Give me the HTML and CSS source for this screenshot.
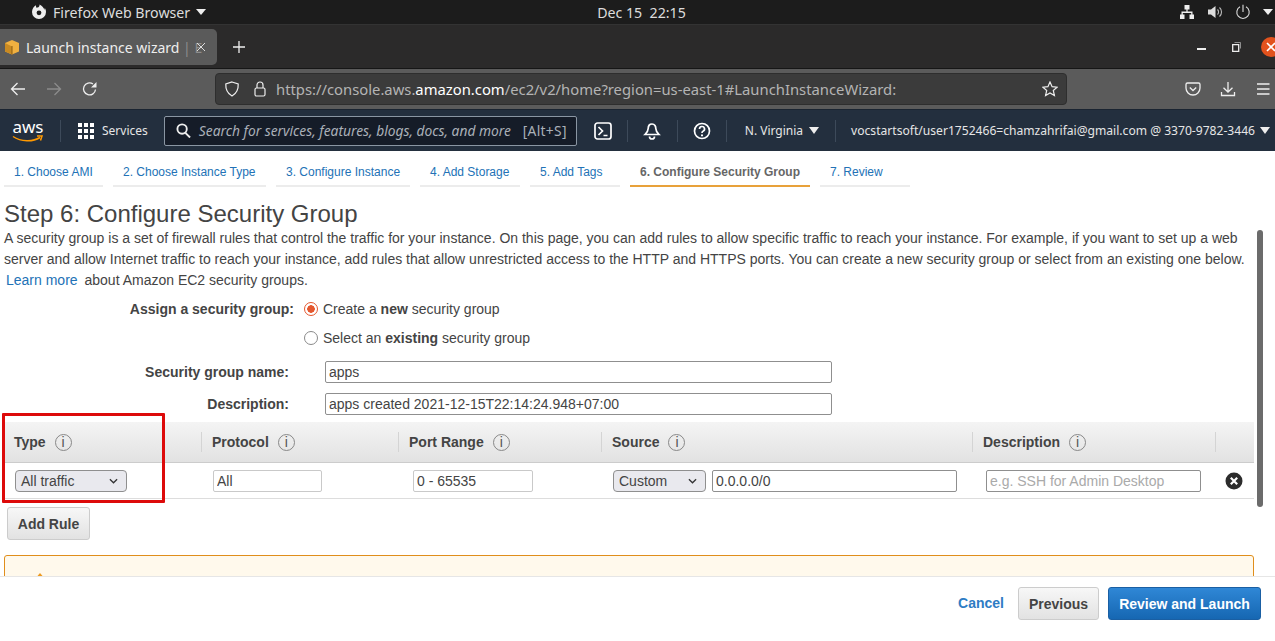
FILE: index.html
```html
<!DOCTYPE html>
<html lang="en">
<head>
<meta charset="utf-8">
<title>Launch instance wizard</title>
<link rel="stylesheet" href="styles.css">
</head>
<body>
<div class="screen">
  <header class="sysbar">
    <div class="sys-left">
      <svg class="ff-logo" viewBox="0 0 16 16" width="16" height="16"><path fill="#eee" d="M5 1.2 C3 2.4 1 4.5 1 8a7 7 0 0 0 14 0c0-1.6-.5-3-1.3-4.2.1.9 0 1.6-.3 2C12.800 3.500 10.800 1.500 8.500 .5c.2 1.500-.5 2.400-1.500 3-.6-.2-1.300-.1-1.800.2C5.100 3 5 2 5 1.200z"/><circle cx="8" cy="8.800" r="2.400" fill="#1b1b1b"/></svg>
      <span class="sys-app">Firefox Web Browser</span>
      <span class="tri tri-sys"></span>
    </div>
    <div class="sys-clock">Dec 15&nbsp; 22:15</div>
    <div class="sys-right">
      <svg viewBox="0 0 16 16" width="16" height="16"><path fill="#eee" d="M5.500 1h5v4.500H8.600V7.500H13.500V10.500H15V15H10.500V10.500H12.200V9H3.800V10.500H5.500V15H1V10.500H2.500V7.500H7.400V5.500H5.500z"/></svg>
      <svg viewBox="0 0 16 16" width="16" height="16"><path fill="#ddd" d="M1 5.500h3L8.500 2v12L4 10.500H1z"/><path fill="none" stroke="#bbb" stroke-width="1.100" d="M10.500 5.500a3.500 3.500 0 0 1 0 5M12.500 3.500a6 6 0 0 1 0 9"/></svg>
      <svg viewBox="0 0 16 16" width="16" height="16" fill="none" stroke="#ddd" stroke-width="1.100"><path d="M8 .8V8M5 2.800a6.200 6.200 0 1 0 6 0"/></svg>
      <span class="tri tri-sys"></span>
    </div>
  </header>

  <div class="tabbar">
    <div class="tab">
      <svg class="favicon" viewBox="0 0 16 16" width="16" height="16"><path fill="#f0b040" d="M8 1l7 3v8.500L8 15.500 1 12.500V4z"/><path fill="#c98a22" d="M8 7.500v8L1 12.500V4z"/><path fill="#8a5d14" d="M7.500 7h1v8.500h-1z"/></svg>
      <span class="tab-title">Launch instance wizard <span class="tab-fade">| E</span></span>
      <svg class="tab-x" viewBox="0 0 10 10" width="10" height="10" fill="none" stroke="#ddd" stroke-width="1"><path d="M1 1l8 8M9 1l-8 8"/></svg>
    </div>
    <svg class="tab-new" viewBox="0 0 12 12" width="12" height="12" fill="none" stroke="#eee" stroke-width="1.300"><path d="M6 0v12M0 6h12"/></svg>
    <div class="win-controls">
      <span class="win-min"></span>
      <svg viewBox="0 0 9 10" width="9" height="10" fill="none" stroke="#eee"><path stroke-width="1.300" d="M.7 2.700h6v6.600h-6z"/><path stroke-width=".8" stroke="#aaa" d="M2.500 .5h6v6"/></svg>
      <span class="win-close"><svg viewBox="0 0 10 10" width="10" height="10" fill="none" stroke="#fff" stroke-width="1.600"><path d="M1 1l8 8M9 1l-8 8"/></svg></span>
    </div>
  </div>

  <div class="toolbar">
    <svg class="tb-back" viewBox="0 0 16 16" width="16" height="16" fill="none" stroke="#eee" stroke-width="1.300"><path d="M15 8H1.500M7.500 2l-6 6 6 6"/></svg>
    <svg class="tb-fwd" viewBox="0 0 16 16" width="16" height="16" fill="none" stroke="#8c8c8c" stroke-width="1.300"><path d="M1 8h13.500M8.500 2l6 6-6 6"/></svg>
    <svg class="tb-reload" viewBox="0 0 16 16" width="16" height="16" fill="none" stroke="#eee" stroke-width="1.300"><path d="M13.500 8.500A6 6 0 1 1 11 3"/><path fill="#eee" stroke="none" d="M14.500 1v5.500H9z"/></svg>
    <div class="urlbar">
      <svg class="url-shield" viewBox="0 0 16 16" width="16" height="16" fill="none" stroke="#eee" stroke-width="1.200"><path d="M8 1l6.200 2c.3 5.500-1.800 9.500-6.200 12C3.600 12.500 1.500 8.500 1.800 3z"/></svg>
      <svg class="url-lock" viewBox="0 0 14 16" width="14" height="16" fill="none" stroke="#eee" stroke-width="1.200"><rect x="2" y="7" width="10" height="8" rx="1.500"/><path d="M4 7V4a3 3 0 0 1 6 0v3"/></svg>
      <span class="url-text">https://console.aws.<b>amazon.com</b>/ec2/v2/home?region=us-east-1#LaunchInstanceWizard:</span>
      <svg class="url-star" viewBox="0 0 16 16" width="16" height="16" fill="none" stroke="#eee" stroke-width="1.200"><path d="M8 1l2.100 4.700 5 .5-3.800 3.300 1.100 5L8 11.900l-4.400 2.600 1.100-5L.9 6.200l5-.5z"/></svg>
    </div>
    <div class="tb-right">
      <svg viewBox="0 0 16 16" width="16" height="16" fill="none" stroke="#eee" stroke-width="1.300"><path d="M2.500 2h11A1.500 1.500 0 0 1 15 3.500V7a7 7 0 0 1-14 0V3.500A1.500 1.500 0 0 1 2.500 2z"/><path d="M4.800 6.500L8 9.500l3.200-3"/></svg>
      <svg viewBox="0 0 16 16" width="16" height="16" fill="none" stroke="#eee" stroke-width="1.300"><path d="M8 1v10M3.500 6.800L8 11l4.500-4.200M1.500 11v3.500h13V11"/></svg>
      <svg viewBox="0 0 16 16" width="16" height="16" fill="none" stroke="#eee" stroke-width="1.300"><path d="M2 3h12.500M2 8h12.500M2 13h12.500"/></svg>
    </div>
  </div>

  <nav class="awsnav">
    <div class="aws-logo">
      <span class="aws-word">aws</span>
      <svg class="aws-smile" viewBox="0 0 32 8" width="32" height="8" fill="none" stroke="#f90" stroke-width="1.500"><path d="M1 1.500c8 5.500 20 5.500 27 1"/><path d="M25 1h5l-1.500 4.500"/></svg>
    </div>
    <span class="nav-sep sep-a"></span>
    <svg class="grid-ic" viewBox="0 0 16 16" width="16" height="16" fill="#fff"><path d="M0 0h4v4H0zM6 0h4v4H6zM12 0h4v4h-4zM0 6h4v4H0zM6 6h4v4H6zM12 6h4v4h-4zM0 12h4v4H0zM6 12h4v4H6zM12 12h4v4h-4z"/></svg>
    <span class="nav-services">Services</span>
    <div class="search">
      <svg viewBox="0 0 16 16" width="15" height="15" fill="none" stroke="#eee" stroke-width="2"><circle cx="6.500" cy="6.500" r="5"/><path d="M10 10.500l5 5"/></svg>
      <span class="search-text">Search for services, features, blogs, docs, and more</span>
      <span class="search-key">[Alt+S]</span>
    </div>
    <svg class="ic-shell" viewBox="0 0 18 18" width="18" height="18" fill="none" stroke="#fff" stroke-width="1.700"><rect x="1" y="1" width="16" height="16" rx="2.500"/><path d="M4.500 5l4 4-4 4M9.500 13.500h4"/></svg>
    <span class="nav-sep sep-b"></span>
    <svg class="ic-bell" viewBox="0 0 18 18" width="18" height="18" fill="none" stroke="#fff" stroke-width="1.700"><path d="M9 2c-2.800 0-3.800 2.400-3.800 4.500 0 2.500-1.200 4-3.200 6h14c-2-2-3.200-3.500-3.200-6C12.800 4.400 11.800 2 9 2z"/><path d="M6.500 14.500a2.500 2.500 0 0 0 5 0"/></svg>
    <span class="nav-sep sep-c"></span>
    <svg class="ic-help" viewBox="0 0 18 18" width="18" height="18" fill="none" stroke="#fff" stroke-width="1.700"><circle cx="9" cy="9" r="7.500"/><path d="M6.500 7a2.500 2.500 0 1 1 3.500 2.300c-.7.3-1 .8-1 1.700"/><path d="M8 12.500h2v1.800H8z" fill="#fff" stroke="none"/></svg>
    <span class="nav-sep sep-d"></span>
    <span class="nav-region">N. Virginia</span>
    <span class="tri tri-nav"></span>
    <span class="nav-sep sep-e"></span>
    <span class="nav-account">vocstartsoft/user1752466=chamzahrifai@gmail.com @ 3370-9782-3446</span>
    <span class="tri tri-nav tri-end"></span>
  </nav>

  <main class="content">
    <ul class="steps">
      <li class="step s1">1. Choose AMI</li>
      <li class="step s2">2. Choose Instance Type</li>
      <li class="step s3">3. Configure Instance</li>
      <li class="step s4">4. Add Storage</li>
      <li class="step s5">5. Add Tags</li>
      <li class="step s6 current">6. Configure Security Group</li>
      <li class="step s7">7. Review</li>
    </ul>

    <h1 class="title">Step 6: Configure Security Group</h1>
    <p class="intro">A security group is a set of firewall rules that control the traffic for your instance. On this page, you can add rules to allow specific traffic to reach your instance. For example, if you want to set up a web server and allow Internet traffic to reach your instance, add rules that allow unrestricted access to the HTTP and HTTPS ports. You can create a new security group or select from an existing one below. <a class="link learn">Learn more</a> about Amazon EC2 security groups.</p>

    <div class="assign">
      <span class="assign-label">Assign a security group:</span>
      <div class="radios">
        <label class="radio-row"><span class="radio on"></span><span>Create a <b>new</b> security group</span></label>
        <label class="radio-row"><span class="radio"></span><span>Select an <b>existing</b> security group</span></label>
      </div>
    </div>

    <div class="field f-name">
      <span class="field-label">Security group name:</span>
      <input class="input input-wide" value="apps">
    </div>
    <div class="field f-desc">
      <span class="field-label">Description:</span>
      <input class="input input-wide" value="apps created 2021-12-15T22:14:24.948+07:00">
    </div>

    <div class="rules">
      <div class="rules-head">
        <div class="th">Type <span class="info">i</span></div>
        <div class="th sep">Protocol <span class="info">i</span></div>
        <div class="th sep">Port Range <span class="info">i</span></div>
        <div class="th sep">Source <span class="info">i</span></div>
        <div class="th sep">Description <span class="info">i</span></div>
        <div class="th sep"></div>
      </div>
      <div class="rules-row">
        <div class="td td-type">
          <div class="select sel-type">All traffic<svg viewBox="0 0 10 6" width="9" height="6" fill="none" stroke="#333" stroke-width="1.400"><path d="M1 1l4 4 4-4"/></svg></div>
        </div>
        <div class="td td-proto"><input class="input input-soft in-proto" value="All"></div>
        <div class="td td-port"><input class="input input-soft in-port" value="0 - 65535"></div>
        <div class="td td-src">
          <div class="select sel-src">Custom<svg viewBox="0 0 10 6" width="9" height="6" fill="none" stroke="#333" stroke-width="1.400"><path d="M1 1l4 4 4-4"/></svg></div>
          <input class="input in-cidr" value="0.0.0.0/0">
        </div>
        <div class="td td-desc"><input class="input in-desc" placeholder="e.g. SSH for Admin Desktop"></div>
        <div class="td td-del">
          <svg viewBox="0 0 18 18" width="18" height="18"><circle cx="9" cy="9" r="8.500" fill="#2c2c2c"/><path d="M5.800 5.800l6.400 6.400M12.200 5.800l-6.400 6.400" stroke="#fff" stroke-width="2.200"/></svg>
        </div>
      </div>
    </div>

    <button class="btn add-rule">Add Rule</button>

    <div class="warning"><span class="warn-tip"></span></div>
    <div class="redbox"></div>
    <div class="scrollthumb"></div>
  </main>

  <footer class="footer">
    <a class="link cancel">Cancel</a>
    <button class="btn previous">Previous</button>
    <button class="btn primary">Review and Launch</button>
  </footer>
</div>
</body>
</html>
```

FILE: styles.css
```css
* { box-sizing: border-box; }
html, body { margin: 0; padding: 0; height: 100%; overflow: hidden; background: #fff; }
.screen { display: flex; flex-direction: column; width: 1275px; height: 641px; overflow: hidden; font-family: "Liberation Sans", Arial, sans-serif; color: #444; }
svg { flex: none; display: block; }

.tri { display: block; width: 0; height: 0; border-left: 5px solid transparent; border-right: 5px solid transparent; border-top: 6px solid #eee; }

/* system bar */
.sysbar { height: 25px; flex: none; background: #1c1c1c; border-bottom: 1px solid #333; display: grid; grid-template-columns: 1fr auto 1fr; align-items: center; color: #dcdcdc; font: 14.200px "Noto Sans", sans-serif; }
.sys-left { display: flex; align-items: center; padding-left: 31px; }
.sys-app { margin-left: 6px; }
.sys-left .tri { margin-left: 6px; }
.sys-clock { padding-left: 8px; }
.sys-right { display: flex; align-items: center; justify-content: flex-end; gap: 12px; padding-right: 2px; }

/* tab bar */
.tabbar { height: 44px; flex: none; background: #2b2a2a; border-bottom: 1px solid #161616; display: flex; align-items: center; }
.tab { width: 217px; height: 36px; background: #5a5a5a; border-radius: 0 5px 5px 0; display: flex; align-items: center; padding: 1px 0 0 4px; color: #eee; font: 14px "Noto Sans", sans-serif; }
.tab-title { margin-left: 6px; width: 170px; white-space: nowrap; }
.tab-fade { color: #8d8d8d; }
.tab-new { margin-left: 16px; }
.win-controls { margin-left: auto; display: flex; align-items: center; }
.win-min { width: 9px; height: 2px; background: #eee; margin-right: 26px; margin-top: 5px; }
.win-close { width: 20px; height: 20px; margin-left: 20px; margin-right: -6px; border-radius: 50%; background: #e2521d; display: flex; align-items: center; justify-content: center; }

/* toolbar */
.toolbar { height: 40px; flex: none; background: #5b5b5b; display: flex; align-items: center; }
.tb-back { margin-left: 10px; }
.tb-fwd { margin-left: 20px; }
.tb-reload { margin-left: 20px; }
.urlbar { margin-left: 117px; width: 852px; height: 32px; background: #3b3b3b; border: 1px solid #2e2e2e; border-radius: 4px; display: flex; align-items: center; padding-left: 8px; color: #b4b4b4; font: 14.800px "Noto Sans", sans-serif; }
.url-lock { margin-left: 13px; }
.url-text { margin-left: 9px; white-space: nowrap; }
.url-text b { font-weight: 400; color: #fff; }
.url-star { margin-left: auto; margin-right: 8px; }
.tb-right { margin-left: 118px; display: flex; gap: 19px; }

/* AWS nav */
.awsnav { height: 42px; flex: none; background: #232f3e; border-top: 1px solid #1a2431; display: flex; align-items: center; color: #e6e6e6; font: 12px "Noto Sans", sans-serif; white-space: nowrap; }
.aws-logo { margin-left: 12px; width: 32px; position: relative; height: 26px; }
.aws-word { display: block; text-align: center; color: #fff; font: 17px/17px "Noto Sans", sans-serif; }
.nav-sep { width: 1px; height: 22px; background: #3d4a5a; }
.sep-a { margin-left: 16px; }
.grid-ic { margin-left: 17px; }
.nav-services { margin-left: 8px; }
.search { margin-left: 16px; width: 413px; height: 30px; background: #151c28; border: 1px solid #8a96a3; border-radius: 2px; display: flex; align-items: center; padding-left: 11px; color: #aab0b8; font-size: 13.800px; white-space: nowrap; }
.search-text { margin-left: 8px; font-style: italic; }
.search-key { margin-left: auto; margin-right: 9px; letter-spacing: .3px; }
.ic-shell { margin-left: 17px; }
.sep-b { margin-left: 15px; }
.ic-bell { margin-left: 15px; }
.sep-c { margin-left: 16px; }
.ic-help { margin-left: 15px; }
.sep-d { margin-left: 15px; }
.nav-region { margin-left: 18px; }
.tri-nav { margin-left: 6px; border-left-width: 5px; border-right-width: 5px; border-top-width: 7px; }
.sep-e { margin-left: 16px; }
.nav-account { margin-left: 15px; font-size: 12.100px; }
.tri-end { margin-left: 5px; }

/* content */
.content { position: relative; flex: 1; min-height: 0; overflow: hidden; padding: 7px 0 0 4px; }
.steps { list-style: none; margin: 0; padding: 0; display: flex; gap: 10px; font-size: 12px; color: #2272b6; }
.step { height: 29px; padding: 7px 10px 0; border-bottom: 2px solid #ececec; white-space: nowrap; }
.s1 { width: 99px; } .s2 { width: 153px; } .s3 { width: 134px; } .s4 { width: 100px; } .s5 { width: 90px; } .s6 { width: 180px; } .s7 { width: 90px; }
.current { color: #666; font-weight: 700; border-bottom-color: #e8a13a; }

.title { margin: 13px 0 0; font-size: 24px; line-height: 28px; font-weight: 400; color: #444; }
.intro { margin: 0; width: 1250px; font-size: 14px; line-height: 21px; color: #444; }
.link { color: #2272b6; }
.learn { margin: 0 3px 0 2px; }

.assign { display: flex; margin-top: 4px; font-size: 14px; }
.assign-label { width: 290px; text-align: right; font-weight: 700; line-height: 29px; color: #444; }
.radios { margin: -1px 0 0 10px; display: flex; flex-direction: column; }
.radio-row { display: flex; align-items: center; height: 29px; gap: 5px; }
.radio { width: 14px; height: 14px; border-radius: 50%; border: 1.500px solid #8a8a8a; background: #fff; }
.radio.on { border: 1.500px solid #e4572e; background: radial-gradient(circle, #e4572e 0 3.500px, #fff 4px); }

.field { display: flex; align-items: center; font-size: 14px; }
.f-name { margin-top: 9px; }
.f-desc { margin-top: 10px; }
.field-label { width: 285px; text-align: right; font-weight: 700; }
.input { font: 14px "Liberation Sans", Arial, sans-serif; color: #444; height: 22px; padding: 0 3px; border: 1px solid #8f8f8f; border-radius: 2px; background: #fff; outline: 0; display: block; }
.input::placeholder { color: #aaa; opacity: 1; }
.input-wide { margin-left: 36px; width: 507px; }
.input-soft { border-color: #c9c9c9; }

.rules { margin-top: 7px; width: 1250px; font-size: 14px; }
.rules-head { height: 41px; background: linear-gradient(#f4f4f4, #e2e2e2); border-bottom: 1px solid #ccc; display: grid; grid-template-columns: 197px 197px 203px 371px 243px 39px; align-items: center; }
.th { height: 20px; line-height: 20px; padding-left: 10px; font-weight: 700; color: #444; display: flex; align-items: center; }
.th.sep { border-left: 1px solid #d4d4d4; padding-left: 10px; }
.info { width: 17px; height: 17px; margin-left: 9px; border: 1px solid #888; border-radius: 50%; color: #555; font: 400 14px/15px "Liberation Sans", Arial, sans-serif; text-align: center; }
.rules-row { height: 36px; border-bottom: 1px solid #ddd; display: grid; grid-template-columns: 197px 197px 203px 371px 243px 39px; align-items: center; }
.td { display: flex; align-items: center; }
.td-type { padding-left: 11px; }
.td-proto { padding-left: 12px; }
.td-port { padding-left: 15px; }
.td-src { padding-left: 12px; gap: 6px; }
.td-desc { padding-left: 14px; }
.td-del { padding-left: 10px; }
.select { height: 22px; padding: 0 8px 0 5px; border: 1px solid #8f8f8f; border-radius: 4px; background: #e9e9ee; color: #444; font-size: 14px; display: flex; align-items: center; justify-content: space-between; }
.sel-type { width: 112px; }
.sel-src { width: 93px; }
.in-proto { width: 109px; }
.in-port { width: 120px; }
.in-cidr { width: 245px; }
.in-desc { width: 215px; }

.btn { font: 700 14px "Liberation Sans", Arial, sans-serif; height: 33px; border: 1px solid #ccc; border-radius: 3px; background: linear-gradient(#f7f7f7, #e2e2e2); color: #444; padding: 0; }
.add-rule { display: block; margin: 8px 0 0 3px; width: 83px; }
.warning { position: relative; margin-top: 15px; width: 1250px; height: 60px; background: #fff9ec; border: 1px solid #e08e1c; border-radius: 3px; }
.warn-tip { position: absolute; left: 30px; top: 17px; width: 0; height: 0; border-left: 5px solid transparent; border-right: 5px solid transparent; border-bottom: 6px solid #ee9a1f; }
.redbox { position: absolute; left: 2px; top: 262px; width: 163px; height: 90px; border: 3px solid #dd0a0a; border-radius: 1px; }
.scrollthumb { position: absolute; left: 1257px; top: 79px; width: 6px; height: 277px; background: #6b6b6b; border-radius: 3px; }

.footer { height: 65px; flex: none; background: #fff; border-top: 1px solid #e6e6e6; position: relative; display: flex; align-items: flex-start; justify-content: flex-end; padding: 10px 14px 0 0; font-size: 14px; }
.cancel { font-weight: 700; line-height: 33px; margin-right: 14px; color: #2e7cc4; }
.previous { width: 81px; margin-right: 9px; }
.primary { width: 153px; background: linear-gradient(#2f87d6, #1667b2); border-color: #1a5fa3; color: #fff; }
```
